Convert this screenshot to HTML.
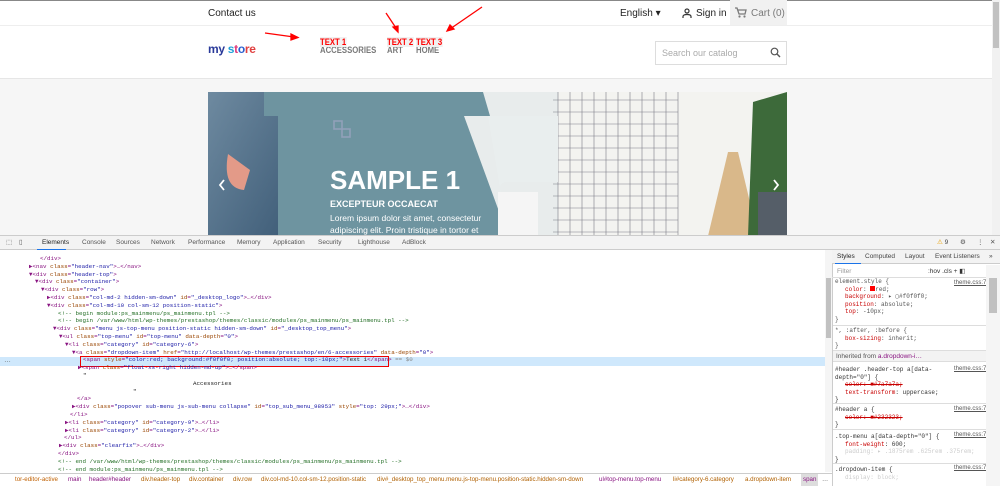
<!DOCTYPE html>
<html><head><meta charset="utf-8"><style>
*{margin:0;padding:0;box-sizing:border-box}
body{width:1000px;height:486px;overflow:hidden;background:#fff;font-family:"Liberation Sans",sans-serif;position:relative}
.a{position:absolute;white-space:nowrap}
.m{font-family:"Liberation Mono",monospace;font-size:5.85px;line-height:7.8px}
.t{color:#881280}.n{color:#994500}.v{color:#1a1aa6}.c{color:#236e25}
.mn{font-size:9px;font-weight:bold;transform:scaleX(0.86);transform-origin:0 0}
</style></head><body>
<div class="a" style="left:0;top:0;width:992px;height:1px;background:#888"></div>
<div class="a" style="left:992px;top:0;width:8px;height:236px;background:#f1f1f1"></div>
<div class="a" style="left:993px;top:2px;width:6px;height:46px;background:#c1c1c1"></div>
<div class="a" style="left:0;top:25px;width:992px;height:1px;background:#eee"></div>
<div class="a" style="left:0;top:78px;width:992px;height:158px;background:#f6f6f6;border-top:1px solid #e6e6e6"></div>
<div class="a" style="left:208px;top:8px;font-size:10px;color:#232323">Contact us</div>
<div class="a" style="left:620px;top:8px;font-size:10px;color:#232323">English ▾</div>
<svg class="a" style="left:682px;top:8px" width="10" height="10" viewBox="0 0 10 10"><circle cx="5" cy="3" r="2" fill="none" stroke="#333" stroke-width="1.2"/><path d="M1 10V8.5Q1 6.5 5 6.5Q9 6.5 9 8.5V10" fill="none" stroke="#333" stroke-width="1.2"/></svg>
<div class="a" style="left:696px;top:8px;font-size:10px;color:#232323">Sign in</div>
<div class="a" style="left:730px;top:0;width:57px;height:25px;background:#f1f1f1"></div>
<svg class="a" style="left:735px;top:7px" width="12" height="11" viewBox="0 0 12 11"><path d="M0 1H2L4 7H10L11 3H3" fill="none" stroke="#7a7a7a" stroke-width="1.3"/><circle cx="4.5" cy="9.5" r="1.1" fill="#7a7a7a"/><circle cx="9.5" cy="9.5" r="1.1" fill="#7a7a7a"/></svg>
<div class="a" style="left:751px;top:8px;font-size:10px;color:#7a7a7a">Cart (0)</div>
<div class="a" style="left:208px;top:42px;font-size:12px;font-weight:bold;letter-spacing:-0.3px"><span style="color:#2a3a9a">my </span><span style="color:#1fa0d8">s</span><span style="color:#e03a7a">t</span><span style="color:#2a60d0">o</span><span style="color:#e04040">re</span></div>
<div class="a mn" style="left:320px;top:45px;color:#7a7a7a">ACCESSORIES</div>
<div class="a mn" style="left:387px;top:45px;color:#7a7a7a">ART</div>
<div class="a mn" style="left:416px;top:45px;color:#7a7a7a">HOME</div>
<div class="a mn" style="left:320px;top:37px;color:red;background:#f0f0f0">TEXT 1</div>
<div class="a mn" style="left:387px;top:37px;color:red;background:#f0f0f0">TEXT 2</div>
<div class="a mn" style="left:416px;top:37px;color:red;background:#f0f0f0">TEXT 3</div>
<div class="a" style="left:655px;top:41px;width:132px;height:24px;border:1px solid #ddd;background:#fff"></div>
<div class="a" style="left:662px;top:48px;font-size:9px;color:#aaa">Search our catalog</div>
<svg class="a" style="left:770px;top:47px" width="11" height="11" viewBox="0 0 11 11"><circle cx="4.5" cy="4.5" r="3.3" fill="none" stroke="#555" stroke-width="1.2"/><path d="M7 7L10 10" stroke="#555" stroke-width="1.4"/></svg>
<svg class="a" style="left:0;top:0" width="1000" height="90"><g stroke="red" stroke-width="1.3" fill="red"><path d="M265 33L294 37"/><path d="M298 37.5L291 34L291 40Z"/><path d="M386 13L396 28"/><path d="M398 32L393 27L398 26Z"/><path d="M482 7L450 29"/><path d="M447 31L450 25L454 29Z"/></g></svg>
<svg class="a" style="left:208px;top:92px" width="579" height="144" viewBox="0 0 579 144">
<defs><linearGradient id="dn" x1="0" x2="1" y1="0" y2="1"><stop offset="0" stop-color="#6e8aa0"/><stop offset="1" stop-color="#3f5d78"/></linearGradient></defs>
<rect width="579" height="144" fill="#e8ecec"/>
<rect width="80" height="144" fill="url(#dn)"/>
<path d="M70 0H275L282 24H256L300 144H70V24H56V0Z" fill="#6e94a0"/>
<path d="M20 62L42 78L36 98Q14 96 20 62Z" fill="#e39a88"/>
<rect x="350" y="0" width="229" height="144" fill="#f3f3f0"/>
<g stroke="#4a4a5a" stroke-width="0.6" opacity="0.7"><path d="M345 8H470M345 20H470M345 32H470M345 44H470M345 56H470M345 68H470M345 80H470M345 92H470M345 104H470M345 116H470M345 128H470M345 140H470"/><path d="M350 0V144M362 0V144M374 0V144M386 0V144M398 0V144M410 0V144M422 0V144M434 0V144M446 0V144M458 0V144M470 0V144"/></g>
<path d="M280 24L300 144L292 100Q290 90 300 90L350 90V24Z" fill="#e9eeee"/>
<rect x="290" y="100" width="40" height="44" fill="#f5f5f5"/>
<path d="M500 144L520 60H530L550 144Z" fill="#d9b88a"/>
<path d="M545 10L579 0V144H540Z" fill="#3d6a3a"/>
<rect x="550" y="100" width="29" height="44" fill="#555e68"/>
<g fill="none" stroke="#aac" stroke-width="1.6" opacity="0.6"><rect x="126" y="29" width="8" height="8"/><rect x="134" y="37" width="8" height="8"/></g>
<path d="M16 88L12 93L16 98" fill="none" stroke="#fff" stroke-width="1.8"/>
<path d="M566 88L570 93L566 98" fill="none" stroke="#fff" stroke-width="1.8"/>
</svg>
<div class="a" style="left:330px;top:165px;font-size:26px;font-weight:bold;color:#fff">SAMPLE 1</div>
<div class="a" style="left:330px;top:199px;font-size:9px;font-weight:bold;color:#fff">EXCEPTEUR OCCAECAT</div>
<div class="a" style="left:330px;top:212px;font-size:8.5px;color:#fff;line-height:12px">Lorem ipsum dolor sit amet, consectetur<br>adipiscing elit. Proin tristique in tortor et</div>
<div class="a" style="left:0;top:235px;width:1000px;height:251px;background:#fff;border-top:1px solid #ccc"></div>
<div class="a" style="left:0;top:236px;width:1000px;height:14px;background:#f3f3f3;border-bottom:1px solid #ccc"></div>
<div class="a" style="left:0;top:238px;font-size:6.5px;color:#555;line-height:9px">
<span class="a" style="left:6px">⬚</span><span class="a" style="left:19px">▯</span>
<span class="a" style="left:42px;color:#222">Elements</span><span class="a" style="left:82px">Console</span><span class="a" style="left:116px">Sources</span><span class="a" style="left:151px">Network</span><span class="a" style="left:188px">Performance</span><span class="a" style="left:237px">Memory</span><span class="a" style="left:273px">Application</span><span class="a" style="left:318px">Security</span><span class="a" style="left:358px">Lighthouse</span><span class="a" style="left:402px">AdBlock</span>
<span class="a" style="left:937px;color:#e8a000">⚠<span style="color:#444"> 9</span></span><span class="a" style="left:960px">⚙</span><span class="a" style="left:977px">⋮</span><span class="a" style="left:990px">✕</span></div>
<div class="a" style="left:37px;top:249px;width:29px;height:1px;background:#1a73e8"></div>
<div class="a" style="left:0;top:357px;width:825px;height:9px;background:#cfe8fc"></div>
<div class="a" style="left:80px;top:356px;width:309px;height:11px;border:1.5px solid #e00"></div>
<div class="a" style="left:4px;top:357px;font-size:7px;color:#666">…</div>
<div class="a m" style="left:0;top:255px;width:825px">
<div style="padding-left:40px" class="t">&lt;/div&gt;</div>
<div style="padding-left:29px"><span class="t">▶&lt;nav <span class="n">class</span>=<span class="v">"header-nav"</span>&gt;…&lt;/nav&gt;</span></div>
<div style="padding-left:29px" class="t">▼&lt;div <span class="n">class</span>=<span class="v">"header-top"</span>&gt;</div>
<div style="padding-left:35px" class="t">▼&lt;div <span class="n">class</span>=<span class="v">"container"</span>&gt;</div>
<div style="padding-left:41px" class="t">▼&lt;div <span class="n">class</span>=<span class="v">"row"</span>&gt;</div>
<div style="padding-left:47px" class="t">▶&lt;div <span class="n">class</span>=<span class="v">"col-md-2 hidden-sm-down"</span> <span class="n">id</span>=<span class="v">"_desktop_logo"</span>&gt;…&lt;/div&gt;</div>
<div style="padding-left:47px" class="t">▼&lt;div <span class="n">class</span>=<span class="v">"col-md-10 col-sm-12 position-static"</span>&gt;</div>
<div style="padding-left:58px" class="c">&lt;!-- begin module:ps_mainmenu/ps_mainmenu.tpl --&gt;</div>
<div style="padding-left:58px" class="c">&lt;!-- begin /var/www/html/wp-themes/prestashop/themes/classic/modules/ps_mainmenu/ps_mainmenu.tpl --&gt;</div>
<div style="padding-left:53px" class="t">▼&lt;div <span class="n">class</span>=<span class="v">"menu js-top-menu position-static hidden-sm-down"</span> <span class="n">id</span>=<span class="v">"_desktop_top_menu"</span>&gt;</div>
<div style="padding-left:59px" class="t">▼&lt;ul <span class="n">class</span>=<span class="v">"top-menu"</span> <span class="n">id</span>=<span class="v">"top-menu"</span> <span class="n">data-depth</span>=<span class="v">"0"</span>&gt;</div>
<div style="padding-left:65px" class="t">▼&lt;li <span class="n">class</span>=<span class="v">"category"</span> <span class="n">id</span>=<span class="v">"category-6"</span>&gt;</div>
<div style="padding-left:72px" class="t">▼&lt;a <span class="n">class</span>=<span class="v">"dropdown-item"</span> <span class="n">href</span>=<span class="v">"http://localhost/wp-themes/prestashop/en/6-accessories"</span> <span class="n">data-depth</span>=<span class="v">"0"</span>&gt;</div>
<div style="padding-left:83px" class="t">&lt;span <span class="n">style</span>=<span class="v">"color:red; background:#f0f0f0; position:absolute; top:-10px;"</span>&gt;<span style="color:#222">Text 1</span>&lt;/span&gt; <span style="color:#888">== $0</span></div>
<div style="padding-left:78px" class="t">▶&lt;span <span class="n">class</span>=<span class="v">"float-xs-right hidden-md-up"</span>&gt;…&lt;/span&gt;</div>
<div style="padding-left:83px;color:#222">"</div>
<div style="padding-left:193px;color:#222">Accessories</div>
<div style="padding-left:133px;color:#222">"</div>
<div style="padding-left:77px" class="t">&lt;/a&gt;</div>
<div style="padding-left:72px" class="t">▶&lt;div <span class="n">class</span>=<span class="v">"popover sub-menu js-sub-menu collapse"</span> <span class="n">id</span>=<span class="v">"top_sub_menu_98953"</span> <span class="n">style</span>=<span class="v">"top: 29px;"</span>&gt;…&lt;/div&gt;</div>
<div style="padding-left:70px" class="t">&lt;/li&gt;</div>
<div style="padding-left:65px" class="t">▶&lt;li <span class="n">class</span>=<span class="v">"category"</span> <span class="n">id</span>=<span class="v">"category-9"</span>&gt;…&lt;/li&gt;</div>
<div style="padding-left:65px" class="t">▶&lt;li <span class="n">class</span>=<span class="v">"category"</span> <span class="n">id</span>=<span class="v">"category-2"</span>&gt;…&lt;/li&gt;</div>
<div style="padding-left:64px" class="t">&lt;/ul&gt;</div>
<div style="padding-left:59px" class="t">▶&lt;div <span class="n">class</span>=<span class="v">"clearfix"</span>&gt;…&lt;/div&gt;</div>
<div style="padding-left:58px" class="t">&lt;/div&gt;</div>
<div style="padding-left:58px" class="c">&lt;!-- end /var/www/html/wp-themes/prestashop/themes/classic/modules/ps_mainmenu/ps_mainmenu.tpl --&gt;</div>
<div style="padding-left:58px" class="c">&lt;!-- end module:ps_mainmenu/ps_mainmenu.tpl --&gt;</div>
</div>
<div class="a" style="left:0;top:473px;width:832px;height:13px;background:#fff;border-top:1px solid #ccc;font-size:6.2px;line-height:12px;color:#881280;overflow:hidden">
<span class="a" style="left:15px;color:#c06000">tor-editor-active</span><span class="a" style="left:68px">main</span><span class="a" style="left:89px">header#header</span><span class="a" style="left:141px;color:#b06000">div.header-top</span><span class="a" style="left:189px;color:#b06000">div.container</span><span class="a" style="left:233px;color:#b06000">div.row</span><span class="a" style="left:261px;color:#b06000">div.col-md-10.col-sm-12.position-static</span><span class="a" style="left:377px;color:#b06000">div#_desktop_top_menu.menu.js-top-menu.position-static.hidden-sm-down</span><span class="a" style="left:599px">ul#top-menu.top-menu</span><span class="a" style="left:673px;color:#b06000">li#category-6.category</span><span class="a" style="left:745px;color:#b06000">a.dropdown-item</span><span class="a" style="left:801px;background:#ddd;padding:0 2px">span</span><span class="a" style="left:822px;color:#555">…</span></div>
<div class="a" style="left:825px;top:250px;width:7px;height:222px;background:#f5f5f5"></div>
<div class="a" style="left:826px;top:278px;width:5px;height:60px;background:#c1c1c1"></div>
<div class="a" style="left:832px;top:250px;width:168px;height:236px;border-left:1px solid #ccc;background:#fff"></div>
<div class="a" style="left:832px;top:250px;width:168px;height:14px;background:#f3f3f3;border-bottom:1px solid #ccc;font-size:6.5px;color:#444;line-height:14px">
<span class="a" style="left:5px;color:#222">Styles</span><span class="a" style="left:33px">Computed</span><span class="a" style="left:73px">Layout</span><span class="a" style="left:103px">Event Listeners</span><span class="a" style="left:157px">»</span></div>
<div class="a" style="left:835px;top:263px;width:26px;height:1px;background:#1a73e8"></div>
<div class="a" style="left:832px;top:265px;width:168px;height:13px;border-bottom:1px solid #ddd;font-size:6.5px;line-height:13px;color:#999"><span class="a" style="left:5px">Filter</span><span class="a" style="left:96px;color:#333">:hov .cls + ◧</span></div>
<div class="a m" style="left:835px;top:278px;font-size:6px;line-height:7.5px;color:#555">
<div>element.style {</div>
<div style="padding-left:10px"><span style="color:#c80000">color</span>: <span style="display:inline-block;width:5px;height:5px;background:red"></span>red;</div>
<div style="padding-left:10px"><span style="color:#c80000">background</span>: ▸ ▢#f0f0f0;</div>
<div style="padding-left:10px"><span style="color:#c80000">position</span>: absolute;</div>
<div style="padding-left:10px"><span style="color:#c80000">top</span>: -10px;</div>
<div>}</div>
</div>
<div class="a" style="left:833px;top:325px;width:153px;height:1px;background:#ddd"></div>
<div class="a m" style="left:835px;top:327px;font-size:6px;line-height:7.5px;color:#555">*, :after, :before {<br><span style="padding-left:10px;color:#c80000">box-sizing</span>: inherit;<br>}</div>
<div class="a" style="left:833px;top:350px;width:153px;height:12px;background:#f3f3f3;border-top:1px solid #ddd;border-bottom:1px solid #ddd;font-size:6.5px;line-height:11px;color:#555;padding-left:3px">Inherited from <span style="color:#881280">a.dropdown-i…</span></div>
<div class="a m" style="left:835px;top:366px;font-size:6px;line-height:7.5px;color:#333">#header .header-top a[data-<br>depth="0"] {<br><span style="padding-left:10px;color:#c80000;text-decoration:line-through">color: ■#7a7a7a;</span><br><span style="padding-left:10px;color:#c80000">text-transform</span>: uppercase;<br>}</div>
<div class="a m" style="left:835px;top:406px;font-size:6px;line-height:7.5px;color:#333">#header a {<br><span style="padding-left:10px;color:#c80000;text-decoration:line-through">color: ■#232323;</span><br>}</div>
<div class="a m" style="left:835px;top:433px;font-size:6px;line-height:7.5px;color:#333">.top-menu a[data-depth="0"] {<br><span style="padding-left:10px;color:#c80000">font-weight</span>: 600;<br><span style="padding-left:10px;color:#ccc">padding: ▸ .1875rem .625rem .375rem;</span><br>}</div>
<div class="a m" style="left:835px;top:466px;font-size:6px;line-height:7.5px;color:#333">.dropdown-item {<br><span style="padding-left:10px;color:#ccc">display: block;</span></div>
<div class="a" style="left:954px;top:280px;font-size:6px;color:#555;text-decoration:underline">theme.css:7</div>
<div class="a" style="left:954px;top:366px;font-size:6px;color:#555;text-decoration:underline">theme.css:7</div>
<div class="a" style="left:954px;top:406px;font-size:6px;color:#555;text-decoration:underline">theme.css:7</div>
<div class="a" style="left:954px;top:432px;font-size:6px;color:#555;text-decoration:underline">theme.css:7</div>
<div class="a" style="left:954px;top:465px;font-size:6px;color:#555;text-decoration:underline">theme.css:7</div>
<div class="a" style="left:833px;top:403px;width:153px;height:1px;background:#ddd"></div>
<div class="a" style="left:833px;top:429px;width:153px;height:1px;background:#ddd"></div>
<div class="a" style="left:833px;top:463px;width:153px;height:1px;background:#ddd"></div>
<div class="a" style="left:986px;top:265px;width:14px;height:221px;background:#f5f5f5"></div>
<div class="a" style="left:989px;top:278px;width:8px;height:35px;background:#c1c1c1"></div>
</body></html>
